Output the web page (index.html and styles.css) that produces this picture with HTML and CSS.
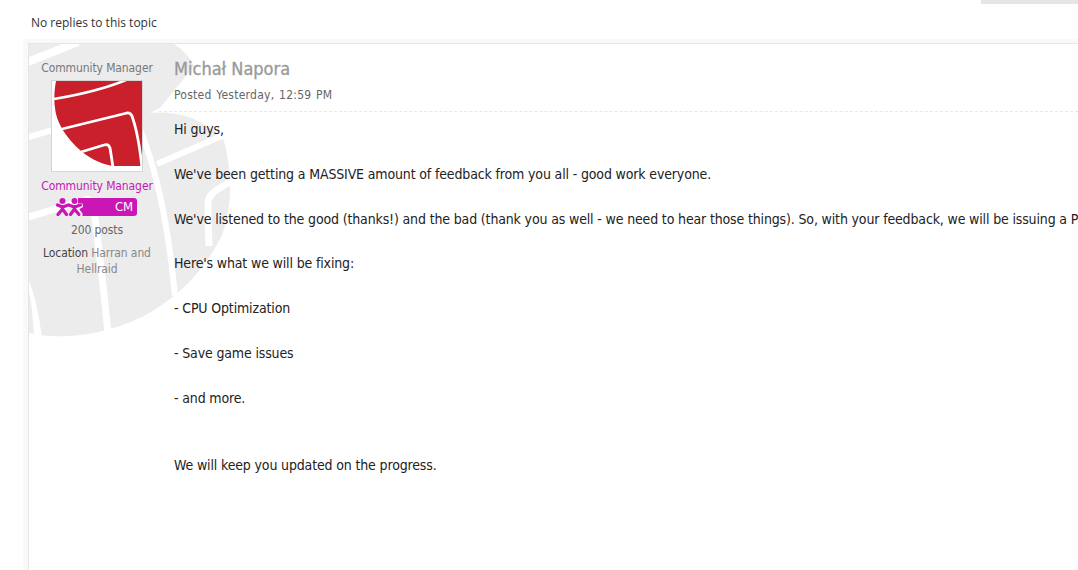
FILE: index.html
```html
<!DOCTYPE html>
<html lang="en">
<head>
    <meta charset="UTF-8">
    <meta name="viewport" content="width=device-width, initial-scale=1.0">
    <title>Topic</title>
    <link rel="stylesheet" href="styles.css">
</head>
<body>
<div class="top-bar"><div class="top-tab"></div></div>
<div class="topic-count">No replies to this topic</div>

<div class="post-frame">
    <div class="post">
        <!-- watermark behind the author column -->
        <svg class="watermark" viewBox="29 44 210 300" width="210" height="300">
            <path fill="#ececec" d="M29 44 L174 44 C183 50 190 57 194 66 L160 108 L150 113 C175 110 205 118 224 141 C233 175 232 208 222 235 C205 270 178 298 142 317 C105 334 70 339 40 335 L29 333 Z"/>
            <g fill="none" stroke="#fff">
                <path stroke-width="8" d="M25 63 L78 42"/>
                <path stroke-width="6" d="M25 138 L122 110 C128 108 132 112 135 118 C150 150 166 200 175 296"/>
                <path stroke-width="7" d="M25 218 L85 200 C90 198 93 203 94 210 C99 250 104 290 108 334"/>
                <path stroke-width="6" d="M157 164 L224 135"/>
                <path stroke-width="7" d="M209 246 C208 225 208 210 208 203 C208 195 215 190 232 181"/>
            </g>
            <path fill="#fff" d="M29 281 C35 295 39 315 42 338 L34 338 C33 315 31 300 29 292 Z"/>
        </svg>

        <div class="author">
            <div class="author-title">Community Manager</div>
            <div class="avatar">
                <svg viewBox="52 81 90 90" width="90" height="90">
                    <path fill="#c9202b" d="M56 81 C54 92 54 100 55 108 C56 122 66 138 81 151 C92 160 104 165 114 166 L142 166 L142 81 Z"/>
                    <g fill="none" stroke="#fff">
                        <path stroke-width="2.5" d="M54 99 C78 95 104 89 126 80"/>
                        <path stroke-width="2.8" d="M62 129 L127 113 C130 112.500 131 114 132 116 C137 130 140 148 142 168"/>
                        <path stroke-width="2.8" d="M81 152 L104 145 C107 144 109 145 110 148 C111 154 112 160 113 168"/>
                    </g>
                </svg>
            </div>
            <div class="author-group">Community Manager</div>
            <div class="badge">
                <svg class="badge-icon" viewBox="0 0 27 18" width="27" height="18">
                    <g fill="none" stroke="#fff" stroke-width="5" stroke-linecap="round">
                        <path d="M20 10 L24.500 7.500 M20 11 L24 16.500"/>
                    </g>
                    <g fill="none" stroke="#c916b5" stroke-width="3.200" stroke-linecap="round">
                        <path d="M1.500 7 L6.500 9 L12.500 7 L18.500 9 L24.500 7"/>
                        <path d="M6.500 8.500 L6.500 11 L2 16.500 M6.500 11 L10.500 16.500"/>
                        <path d="M18.500 8.500 L18.500 11 L14.500 16.500 M18.500 11 L23 16.500"/>
                    </g>
                    <circle cx="6.500" cy="3" r="3" fill="#c916b5"/>
                    <circle cx="18.500" cy="3" r="3" fill="#c916b5"/>
                </svg>
                <span class="badge-bar">CM</span>
            </div>
            <div class="author-posts">200 posts</div>
            <div class="author-location"><span class="location-label">Location</span> Harran and Hellraid</div>
        </div>

        <div class="post-main">
            <div class="post-head">
                <div class="post-name">Michał Napora</div>
                <div class="post-date">Posted Yesterday, 12:59 PM</div>
            </div>
            <div class="post-body">
                Hi guys,<br><br>
                We've been getting a MASSIVE amount of feedback from you all - good work everyone.<br><br>
                We've listened to the good (thanks!) and the bad (thank you as well - we need to hear those things). So, with your feedback, we will be issuing a Patch soon to address the main problems.<br><br>
                Here's what we will be fixing:<br><br>
                - CPU Optimization<br><br>
                - Save game issues<br><br>
                - and more.<br><br><br>
                We will keep you updated on the progress.
            </div>
        </div>
    </div>
</div>
</body>
</html>
```

FILE: styles.css
```css
html, body {
    margin: 0;
    padding: 0;
    height: 100%;
    overflow: hidden;
    background: #fff;
}

body {
    display: flex;
    flex-direction: column;
    font-family: "DejaVu Sans Condensed", "DejaVu Sans", sans-serif;
    font-size: 12px;
    color: #333;
}

.top-bar {
    display: flex;
    justify-content: flex-end;
}

.top-tab {
    width: 97px;
    height: 4px;
    background: #e5e5e3;
}

.topic-count {
    font-family: "Open Sans", sans-serif;
    font-size: 12px;
    line-height: 18px;
    color: #333;
    padding: 10px 0 0 31px;
    height: 25px;
}

.post-frame {
    flex: 1;
    min-height: 0;
    margin-left: 23px;
    padding: 4px 0 0 5px;
    background: #f9f9f9;
}

.post {
    position: relative;
    display: flex;
    box-sizing: border-box;
    height: 100%;
    background: #fff;
    border-top: 1px solid #e6e6e6;
    border-left: 1px solid #e6e6e6;
    overflow: hidden;
}

.watermark {
    position: absolute;
    left: 0;
    top: 0;
}

.author {
    position: relative;
    flex: 0 0 114px;
    padding: 16px 5px 0 11px;
    text-align: center;
    line-height: 16px;
    color: #777;
    letter-spacing: -0.1px;
}

.author-title {
    color: #777;
    white-space: nowrap;
}

.avatar {
    width: 90px;
    height: 90px;
    margin: 4px auto 6px;
    background: #fff;
    border: 1px solid #d5d5d5;
    overflow: hidden;
}

.avatar svg {
    display: block;
}

.author-group {
    color: #c916b5;
    white-space: nowrap;
}

.badge {
    display: flex;
    width: 81px;
    height: 18px;
    margin: 4px 0 6px 16px;
}

.badge-icon {
    margin-right: -5px;
    position: relative;
    z-index: 1;
}

.badge-bar {
    flex: 1;
    background: #c916b5;
    color: #fff;
    font-size: 13px;
    line-height: 18px;
    text-align: right;
    padding-right: 4px;
    border-radius: 0 3px 3px 0;
}

.author-posts {
    color: #666;
}

.author-location {
    margin-top: 7px;
    color: #888;
}

.location-label {
    color: #444;
}

.post-main {
    position: relative;
    flex: 1;
    min-width: 0;
}

.post-head {
    padding: 14px 0 8px 15px;
    border-bottom: 1px dashed #e8e8e8;
}

.post-name {
    font-size: 18px;
    line-height: 22px;
    color: #999;
    -webkit-text-stroke: 0.3px #999;
}

.post-date {
    margin-top: 7px;
    line-height: 16px;
    color: #666;
    letter-spacing: 0.25px;
    word-spacing: 1px;
}

.post-body {
    padding: 6px 0 0 15px;
    font-size: 14px;
    line-height: 22.4px;
    color: #222;
    white-space: nowrap;
    letter-spacing: -0.15px;
}
```
